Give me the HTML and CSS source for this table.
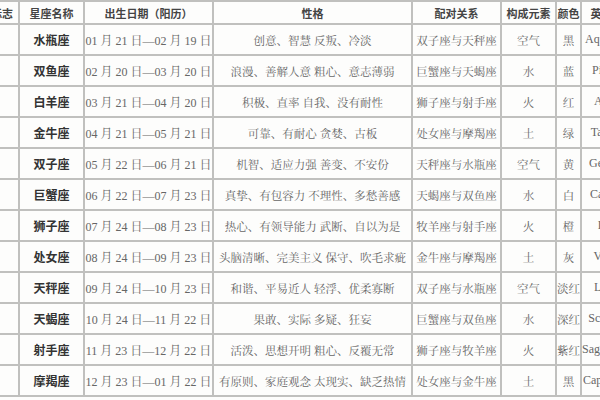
FILE: index.html
```html
<!DOCTYPE html>
<html lang="zh-CN">
<head>
<meta charset="utf-8">
<link rel="stylesheet" href="styles.css">
</head>
<body>
<div class="frame">
<table class="zodiac">
  <colgroup>
    <col class="c-logo"><col class="c-name"><col class="c-date"><col class="c-trait"><col class="c-pair"><col class="c-elem"><col class="c-color"><col class="c-en">
  </colgroup>
  <thead>
    <tr class="head">
      <th>标志</th><th>星座名称</th><th>出生日期（阳历）</th><th>性格</th><th>配对关系</th><th>构成元素</th><th>颜色</th><th>英文名</th>
    </tr>
  </thead>
  <tbody>
    <tr><td></td><td class="name">水瓶座</td><td class="date">01 月 21 日—02 月 19 日</td><td>创意、智慧 反叛、冷淡</td><td>双子座与天秤座</td><td>空气</td><td>黑</td><td class="en">Aquarius</td></tr>
    <tr><td></td><td class="name">双鱼座</td><td class="date">02 月 20 日—03 月 20 日</td><td>浪漫、善解人意 粗心、意志薄弱</td><td>巨蟹座与天蝎座</td><td>水</td><td>蓝</td><td class="en">Pisces</td></tr>
    <tr><td></td><td class="name">白羊座</td><td class="date">03 月 21 日—04 月 20 日</td><td>积极、直率 自我、没有耐性</td><td>狮子座与射手座</td><td>火</td><td>红</td><td class="en">Aries</td></tr>
    <tr><td></td><td class="name">金牛座</td><td class="date">04 月 21 日—05 月 21 日</td><td>可靠、有耐心 贪婪、古板</td><td>处女座与摩羯座</td><td>土</td><td>绿</td><td class="en">Taurus</td></tr>
    <tr><td></td><td class="name">双子座</td><td class="date">05 月 22 日—06 月 21 日</td><td>机智、适应力强 善变、不安份</td><td>天秤座与水瓶座</td><td>空气</td><td>黄</td><td class="en">Gemini</td></tr>
    <tr><td></td><td class="name">巨蟹座</td><td class="date">06 月 22 日—07 月 23 日</td><td>真挚、有包容力 不理性、多愁善感</td><td>天蝎座与双鱼座</td><td>水</td><td>白</td><td class="en">Cancer</td></tr>
    <tr><td></td><td class="name">狮子座</td><td class="date">07 月 24 日—08 月 23 日</td><td>热心、有领导能力 武断、自以为是</td><td>牧羊座与射手座</td><td>火</td><td>橙</td><td class="en">Leo</td></tr>
    <tr><td></td><td class="name">处女座</td><td class="date">08 月 24 日—09 月 23 日</td><td>头脑清晰、完美主义 保守、吹毛求疵</td><td>金牛座与摩羯座</td><td>土</td><td>灰</td><td class="en">Virgo</td></tr>
    <tr><td></td><td class="name">天秤座</td><td class="date">09 月 24 日—10 月 23 日</td><td>和谐、平易近人 轻浮、优柔寡断</td><td>双子座与水瓶座</td><td>空气</td><td>淡红</td><td class="en">Libra</td></tr>
    <tr><td></td><td class="name">天蝎座</td><td class="date">10 月 24 日—11 月 22 日</td><td>果敢、实际 多疑、狂妄</td><td>巨蟹座与双鱼座</td><td>水</td><td>深红</td><td class="en">Scorpio</td></tr>
    <tr><td></td><td class="name">射手座</td><td class="date">11 月 23 日—12 月 22 日</td><td>活泼、思想开明 粗心、反覆无常</td><td>狮子座与牧羊座</td><td>火</td><td>紫红</td><td class="en">Sagittarius</td></tr>
    <tr><td></td><td class="name">摩羯座</td><td class="date">12 月 23 日—01 月 22 日</td><td>有原则、家庭观念 太现实、缺乏热情</td><td>处女座与金牛座</td><td>土</td><td>黑</td><td class="en">Capricorn</td></tr>
  </tbody>
</table>
</div>
</body>
</html>
```
FILE: styles.css
```css
html, body {
  margin: 0;
  padding: 0;
  background: #fdfdfc;
}
.frame {
  width: 600px;
  height: 400px;
  overflow: hidden;
}
.zodiac {
  margin-left: -16px;
  border-collapse: collapse;
  table-layout: fixed;
  width: 648px;
  font-family: "Liberation Serif", "Noto Serif CJK SC", "Noto Sans CJK SC", serif;
  font-size: 11.5px;
  color: #666;
}
.c-logo { width: 34px; }
.c-name { width: 65px; }
.c-date { width: 129px; }
.c-trait { width: 199px; }
.c-pair { width: 89px; }
.c-elem { width: 55px; }
.c-color { width: 25px; }
.c-en { width: 52px; }
.zodiac th,
.zodiac td {
  border: 2px solid #c0c0be;
  padding: 0;
  text-align: center;
  vertical-align: middle;
  white-space: nowrap;
  overflow: visible;
}
.head th {
  height: 21px;
  font-family: "Noto Sans CJK SC", sans-serif;
  font-weight: 700;
  font-size: 11px;
  color: #444;
}
.zodiac td {
  height: 29px;
}
.zodiac td.name {
  font-family: "Noto Sans CJK SC", sans-serif;
  font-weight: 700;
  font-size: 12px;
  color: #333;
}
.zodiac td.date {
  font-size: 12px;
}
.zodiac td.en {
  font-size: 12px;
}
```
